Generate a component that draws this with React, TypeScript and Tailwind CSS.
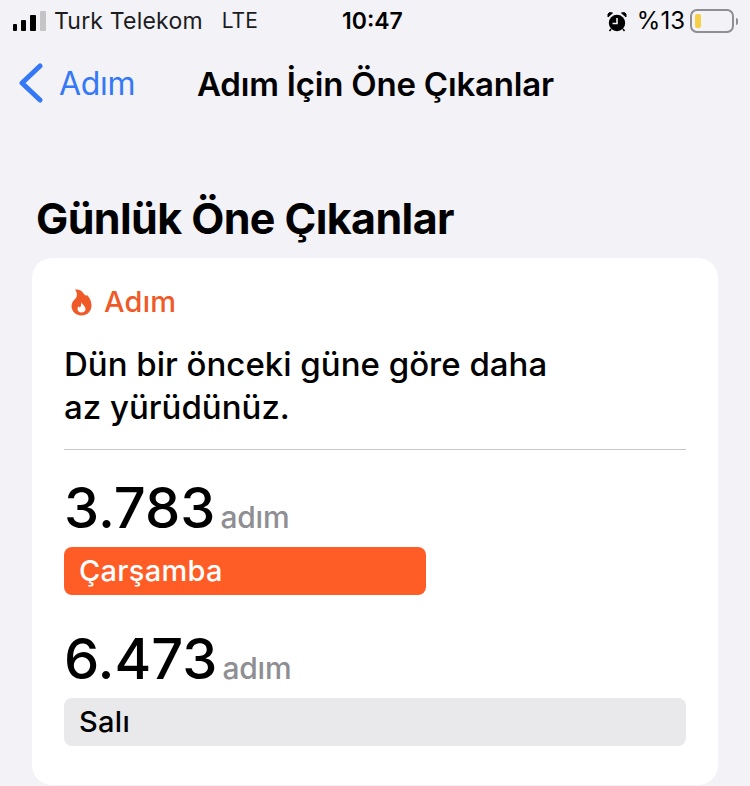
import React from 'react';

const Signal = () => (
  <div className="flex items-end gap-[4px] h-[20px]">
    <div className="w-[4px] h-[7px] rounded-[1px] bg-black" />
    <div className="w-[5px] h-[11px] rounded-[1px] bg-black" />
    <div className="w-[6px] h-[16px] rounded-[1px] bg-black" />
    <div className="w-[6px] h-[20px] rounded-[1px] bg-[#c4c4c6]" />
  </div>
);

const Alarm = () => (
  <svg width="20" height="21" viewBox="0 0 20 21">
    <circle cx="10" cy="12" r="8.2" fill="#000" />
    <path d="M1 6 L5.5 2 Q2 0.8 1 3 Z M19 6 L14.5 2 Q18 0.8 19 3 Z" fill="#000" stroke="#000" strokeWidth="1" />
    <path d="M10 7 V12.5 H5.5" fill="none" stroke="#f2f2f7" strokeWidth="1.6" />
    <path d="M4 18 L2.5 20 M16 18 L17.5 20" stroke="#000" strokeWidth="1.5" />
  </svg>
);

const Flame = () => (
  <svg width="21" height="27" viewBox="0 0 21 27">
    <path
      d="M4 0.5 C9 0 11.5 2.5 13 5 C14 6.5 15.5 7 16 6 C18.5 8.5 20.5 12 20.5 16.5 C20.5 22.5 16 26.5 10.5 26.5 C5 26.5 0.5 22.5 0.5 17 C0.5 13.5 2.5 11.5 4.5 9.5 C6.5 7.5 6.5 3.5 4 0.5 Z"
      fill="#f05a28"
    />
    <path
      d="M10.5 13 C11 15.5 14.5 17 14.5 20 C14.5 22.2 12.8 23.5 10.5 23.5 C8.2 23.5 6.5 22.2 6.5 20 C6.5 18.8 7 17.8 7.8 17.2 C8.1 18.2 8.7 18.5 9.2 18.3 C10 17 10.2 15 10.5 13 Z"
      fill="#fff"
    />
  </svg>
);

export default function App() {
  return (
    <div className="w-[750px] h-[786px] overflow-hidden bg-[#f2f2f7] font-['Inter','Liberation_Sans',sans-serif] text-black">
      {/* status bar */}
      <div className="h-[40px] flex items-center pl-[13px] pr-[12px] pt-[2px] relative">
        <Signal />
        <span className="ml-[8px] text-[23px] tracking-[0.2px] text-[#1c1c1e]">Turk Telekom</span>
        <span className="ml-[19px] text-[21px] text-[#1c1c1e]">LTE</span>
        <span className="absolute left-[342px] top-[5px] text-[23px] font-semibold leading-[32px]">10:47</span>
        <div className="ml-auto flex items-center">
          <Alarm />
          <span className="ml-[10px] text-[24px]">%13</span>
          <div className="ml-[5px] w-[44px] h-[24px] rounded-[7px] border-2 border-[#8e8e93] p-[3px]">
            <div className="w-[6px] h-full rounded-[2px] bg-[#f7cf46]" />
          </div>
          <div className="w-[2px] h-[7px] ml-[2px] rounded-r-[2px] bg-[#8e8e93]" />
        </div>
      </div>
      {/* nav bar */}
      <div className="h-[88px] flex items-center pl-[18px] relative">
        <svg width="26" height="40" viewBox="0 0 26 40" className="mt-[-2px]">
          <path d="M22 3 L4 20 L22 37" fill="none" stroke="#3478f6" strokeWidth="5" strokeLinecap="round" strokeLinejoin="round" />
        </svg>
        <span className="ml-[15px] text-[32px] text-[#3478f6] tracking-[-0.3px]">Adım</span>
        <span className="absolute left-[197px] top-[22px] text-[33px] font-semibold leading-[44px] tracking-[-0.2px]">Adım İçin Öne Çıkanlar</span>
      </div>
      {/* section */}
      <h1 className="mt-[62px] ml-[36px] text-[43px] leading-[56px] font-bold tracking-[-0.6px]">Günlük Öne Çıkanlar</h1>
      <div className="mx-[32px] mt-[12px] h-[527px] rounded-[20px] bg-white px-[32px] pt-[28px]">
        <div className="flex items-center ml-[7px] h-[32px]">
          <Flame />
          <span className="ml-[12px] text-[29px] font-medium tracking-[0.2px] text-[#f05a28]">Adım</span>
        </div>
        <p className="mt-[25px] text-[33px] leading-[43px] font-medium">
          Dün bir önceki güne göre daha
          <br />
          az yürüdünüz.
        </p>
        <div className="mt-[20px] h-px bg-[#c6c6c8]" />
        <div className="mt-[28px] flex items-baseline h-[60px]">
          <span className="text-[56px] leading-[60px] font-medium">3.783</span>
          <span className="ml-[5px] text-[30px] font-medium tracking-[-0.2px] text-[#8e8e93]">adım</span>
        </div>
        <div className="mt-[9px] w-[362px] h-[48px] rounded-[8px] bg-[#ff5c26] flex items-center px-[15px] text-[29px] font-medium tracking-[0.3px] text-white">Çarşamba</div>
        <div className="mt-[34px] flex items-baseline h-[60px]">
          <span className="text-[56px] leading-[60px] font-medium">6.473</span>
          <span className="ml-[5px] text-[30px] font-medium tracking-[-0.2px] text-[#8e8e93]">adım</span>
        </div>
        <div className="mt-[9px] h-[48px] rounded-[8px] bg-[#e9e9eb] flex items-center px-[15px] text-[29px] font-medium tracking-[0.3px]">Salı</div>
      </div>
    </div>
  );
}
